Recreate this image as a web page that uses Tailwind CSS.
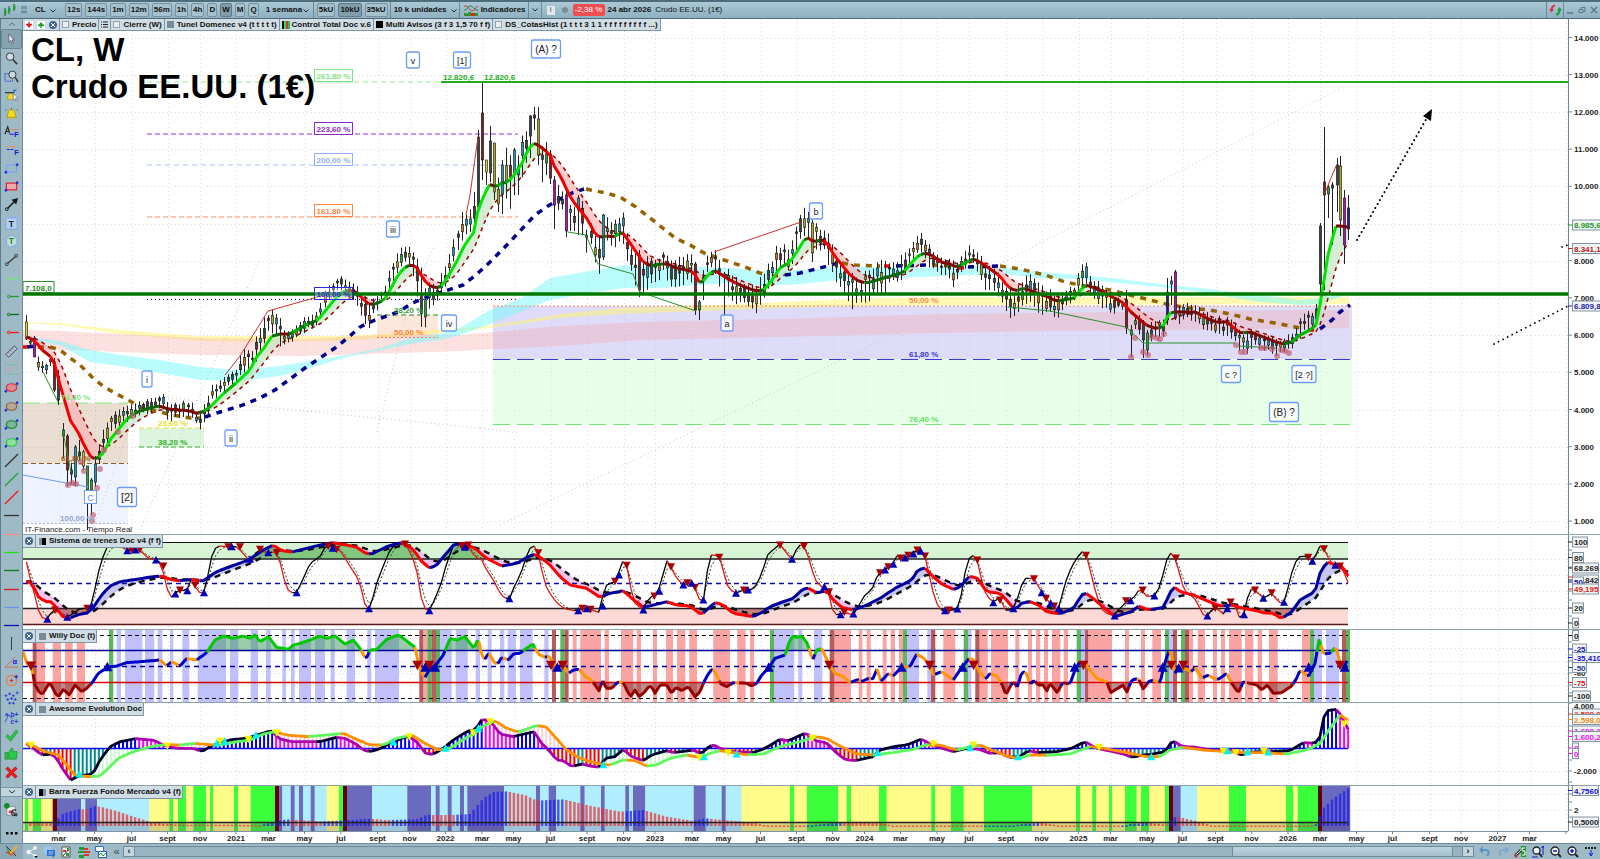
<!DOCTYPE html>
<html lang="es">
<head>
<meta charset="utf-8">
<title>CL, W - Crudo EE.UU. (1€)</title>
<script src="https://cdn.jsdelivr.net/npm/@tailwindcss/browser@4"></script>
</head>
<body class="bg-white font-['Liberation_Sans',Arial,sans-serif] text-[8px] leading-none text-[#111] overflow-hidden">
<div class="flex h-screen flex-col">

<header class="flex h-[19px] shrink-0 items-center border-t-2 border-b border-t-[#4d6c7c] border-b-[#4f6a78] bg-linear-to-b from-[#abc8d6] to-[#8fb0c0] font-bold">
  <div class="flex h-full w-[19px] items-center justify-center"><svg class="h-3 w-4" viewBox="0 0 16 12"><path d="M3 4v8M7 2v8M12 0v7" stroke="#1d5c2a"/><path d="M2 6h2.4v4H2zM6 4h2.4v4H6zM11 1.500h2.400v4H11z" fill="#1fa035"/></svg></div>
  <svg class="mr-2 ml-[2px] h-3 w-[6px]" viewBox="0 0 8 12" fill="none" stroke="#55707e"><path d="M1 1h2v3H1zM5 1h2v3H5zM1 7h2v3H1zM5 7h2v3H5z"/></svg>
  <div class="relative h-full w-[30px]"><select aria-label="Valor" class="h-full w-full appearance-none outline-none"><option>CL</option></select><svg class="pointer-events-none absolute right-[9px] top-[7px] h-1 w-1.5" viewBox="0 0 6 4"><path d="M.5.500 3 3 5.500.500" fill="none" stroke="#1c2c34"/></svg></div>
  <nav id="frames" class="flex items-center gap-[3px]" aria-label="Marco temporal"></nav>
  <div class="relative ml-[3px] h-full w-[52px] border-r border-[#6d8999]"><select aria-label="Periodo" class="h-full w-full appearance-none pl-1 outline-none"><option>1 semana</option></select><svg class="pointer-events-none absolute right-1 top-[7px] h-1 w-1.5" viewBox="0 0 6 4"><path d="M.5.500 3 3 5.500.500" fill="none" stroke="#1c2c34"/></svg></div>
  <div id="units" class="ml-[3px] flex items-center gap-[3px]"></div>
  <div class="relative ml-[2px] h-full w-[70px] border-x border-[#6d8999]"><select aria-label="Unidades" class="h-full w-full appearance-none pl-[3px] outline-none"><option>10 k unidades</option></select><svg class="pointer-events-none absolute right-[2px] top-[7px] h-1 w-1.5" viewBox="0 0 6 4"><path d="M.5.500 3 3 5.500.500" fill="none" stroke="#1c2c34"/></svg></div>
  <button class="flex h-full items-center gap-[3px] pl-1 pr-[2px]"><svg class="h-3 w-[14px]" viewBox="0 0 14 12"><path d="M0 12V9h3v3zM4 12V8h3v4zM11 12V9h3v3z" fill="#18a028"/><path d="M3 12v-2h1v2zM7 12V9h4v3z" fill="#e02020"/><path d="M0 3c3-5 5 4 8 4s3-4 6-5" fill="none" stroke="#d04040"/><path d="M0 6c3 1 4-5 7-4s4 5 7 4" fill="none" stroke="#208838"/></svg>Indicadores</button>
  <button class="flex h-full w-[14px] items-center justify-center border-x border-[#6d8999]" aria-label="Más indicadores"><svg class="h-1 w-1.5" viewBox="0 0 6 4"><path d="M.5.500 3 3 5.500.500" fill="none" stroke="#1c2c34"/></svg></button>
  <button class="ml-[5px] flex h-[9px] w-2 items-center justify-center bg-[#e4e8ea] text-[#788]" aria-label="Información">i</button>
  <svg class="ml-[7px] size-[6px]" viewBox="0 0 6 6"><circle cx="3" cy="3" r="3" fill="#7c8b92"/></svg>
  <span class="ml-[5px] flex h-3 w-8 items-center justify-center rounded-[2px] bg-[#ef4d50] font-normal text-white">-2,38 %</span>
  <span class="ml-[3px]">24 abr 2026</span>
  <span class="ml-1 font-normal">Crudo EE.UU. (1€)</span>
  <div class="ml-auto flex h-full items-center">
    <button class="flex h-full w-[18px] items-center justify-center border-x border-[#6d8999]" aria-label="Sincronizar"><svg class="h-3 w-[13px]" viewBox="0 0 13 12" fill="none" stroke-width="2"><path d="M6 1.500C3 1.500 2.500 4 2.500 7" stroke="#e03040"/><path d="m0 5 2.500 3.500L5 5z" fill="#e03040"/><path d="M7 10.500c3 0 3.500-2.500 3.500-5" stroke="#10a030"/><path d="M8 6.500 10.500 3 13 6.500z" fill="#10a030"/></svg></button>
    <button class="flex w-3 justify-center" aria-label="Minimizar"><svg class="size-2" viewBox="0 0 8 8"><path d="M1 7h6" stroke="#62798a" stroke-width="1.500"/></svg></button>
    <button class="flex w-3 justify-center" aria-label="Restaurar"><svg class="size-2" viewBox="0 0 8 8" fill="none" stroke="#62798a"><path d="M1 3.500h4v3H1zM3 3.500v-2h4v4H5"/></svg></button>
    <button class="flex w-3 justify-center" aria-label="Cerrar"><svg class="size-2" viewBox="0 0 8 8"><path d="m1 1 6 6M7 1 1 7" stroke="#62798a" stroke-width="1.500"/></svg></button>
  </div>
</header>

<div class="flex min-h-0 flex-1">
  <aside class="flex w-[23px] shrink-0 flex-col border-l border-r border-l-[#5d7b8a] border-r-[#6e8a98] bg-[#9fbac7]">
    <button class="flex h-[10px] shrink-0 items-center justify-center" aria-label="Subir"><svg class="h-1 w-2" viewBox="0 0 8 4"><path d="M1 3.500 4 1l3 2.500" fill="none" stroke="#56707e"/></svg></button>
    <div id="tools" class="flex min-h-0 flex-1 flex-col"></div>
    <button class="flex h-[10px] shrink-0 items-center justify-center border-y border-[#7b97a5] bg-[#c3d6df] mt-[6px]" aria-label="Bajar"><svg class="h-1 w-2" viewBox="0 0 8 4"><path d="M1 .5 4 3 7 .500" fill="none" stroke="#23343d"/></svg></button>
    <button class="flex h-[26px] shrink-0 items-center justify-center" aria-label="Plantillas"><svg class="size-[15px]" viewBox="0 0 16 16"><path d="M3 4h9v9H3z" fill="#f4f6f6" stroke="#889"/><circle cx="3" cy="3" r="3" fill="#128a28"/><path d="M5 8h3v3H5z" fill="#d44"/><path d="m9 9 5 5m-1-6a3 3 0 1 0 1 3" fill="none" stroke="#333" stroke-width="1.500"/></svg></button>
    <button class="flex h-[20px] shrink-0 items-center justify-center" aria-label="Más"><svg class="h-2 w-3" viewBox="0 0 12 8"><path d="M0 3h2.500v2.500H0zM4.500 3H7v2.500H4.500zM9 3h2.500v2.500H9z" fill="#111"/></svg></button>
  </aside>

  <main class="flex min-w-0 flex-1 flex-col">
    <section class="relative flex min-h-0 flex-1" aria-label="Precio">
      <svg id="price" class="h-full min-w-0 flex-1"></svg><svg id="priceAxis" class="h-full w-8 shrink-0"></svg>
      <div class="absolute left-0 top-0 flex h-[12px] items-center border-b border-r border-[#8096a2] bg-[#d0dde4] font-bold whitespace-pre">
        <div class="flex h-full w-9 items-center justify-around">
          <button aria-label="Añadir rojo"><svg class="size-2" viewBox="0 0 8 8"><path d="M0 0h8v8H0z" fill="#fff"/><path d="M4 1v5M2 3.500 4 6l2-2.500M1 3.500h6" stroke="#e02020" stroke-width="1.300" fill="none"/></svg></button>
          <button aria-label="Añadir verde"><svg class="size-2" viewBox="0 0 8 8"><path d="M0 0h8v8H0z" fill="#fff"/><path d="M4 2v5M2 4.500 4 2l2 2.500M1 4.500h6" stroke="#18a028" stroke-width="1.300" fill="none"/></svg></button>
          <button aria-label="Cerrar"><svg class="size-2" viewBox="0 0 8 8"><circle cx="4" cy="4" r="4" fill="#3f6690"/><path d="m2 2 4 4M6 2 2 6" stroke="#fff"/></svg></button>
        </div>
        <button class="flex h-full items-center gap-[3px] border-l border-[#8096a2] px-[2px]"><i class="size-[7px] border border-[#93a5ae] bg-[#e6eef2]"></i>Precio</button>
        <button class="flex h-full w-3 items-center justify-center border-l border-[#8096a2]" aria-label="Lista"><svg class="size-[7px]" viewBox="0 0 7 7"><path d="M0 1h1M2 1h5M0 3.500h1M2 3.500h5M0 6h1M2 6h5" stroke="#222"/></svg></button>
        <button class="flex h-full items-center gap-[3px] border-l border-[#8096a2] px-[2px]"><i class="size-[7px] border border-[#93a5ae] bg-[#e6eef2]"></i>Cierre (W)</button>
        <button class="flex h-full items-center gap-[3px] border-l border-[#8096a2] px-[2px]"><i class="size-[7px] bg-[#768c97]"></i>Tunel Domenec v4 (t t t t t)</button>
        <button class="flex h-full items-center gap-[2px] border-l border-[#8096a2] px-[2px]"><svg class="h-2 w-2" viewBox="0 0 8 8"><path d="M0 0h2v8H0z" fill="#111"/><path d="M2 0h2v8H2z" fill="#20e050"/><path d="M4 0h2v8H4z" fill="#e03030"/><path d="M6 0h2v8H6z" fill="#20c060"/></svg>Control Total Doc v.6</button>
        <button class="flex h-full items-center gap-[3px] border-l border-[#8096a2] px-[2px]"><i class="size-[7px] bg-black"></i>Multi Avisos (3 f 3 1,5 70 f f)</button>
        <button class="flex h-full items-center gap-[3px] border-l border-[#8096a2] px-[2px]"><i class="size-[7px] border border-[#93a5ae] bg-[#e6eef2]"></i>DS_CotasHist (1 t t t 3 1 1 f f f f f f f f f ...)</button>
      </div>
    </section>
    <section class="relative flex h-[95px] shrink-0 border-t border-[#8ca1ad]" aria-label="Sistema de trenes">
      <svg id="trenes" class="h-full min-w-0 flex-1"></svg><svg id="trenesAxis" class="h-full w-8 shrink-0"></svg>
      <div class="absolute left-0 top-0 flex h-[13px] items-center border-b border-r border-[#8096a2] bg-[#d0dde4] font-bold">
        <button class="flex h-full w-[13px] items-center justify-center border-r border-[#8096a2]" aria-label="Cerrar"><svg class="size-2" viewBox="0 0 8 8"><circle cx="4" cy="4" r="4" fill="#3f6690"/><path d="m2 2 4 4M6 2 2 6" stroke="#fff"/></svg></button>
        <svg class="mx-[3px] size-[7px]" viewBox="0 0 7 7"><path d="M0 0h3v7H0z" fill="#7c929d"/><path d="M3 0h4v7H3z"/></svg><span class="pr-px">Sistema de trenes Doc v4 (f f)</span>
      </div>
    </section>
    <section class="relative flex h-[73px] shrink-0 border-t border-[#8ca1ad]" aria-label="Willy">
      <svg id="willy" class="h-full min-w-0 flex-1"></svg><svg id="willyAxis" class="h-full w-8 shrink-0"></svg>
      <div class="absolute left-0 top-0 flex h-[13px] items-center border-b border-r border-[#8096a2] bg-[#d0dde4] font-bold">
        <button class="flex h-full w-[13px] items-center justify-center border-r border-[#8096a2]" aria-label="Cerrar"><svg class="size-2" viewBox="0 0 8 8"><circle cx="4" cy="4" r="4" fill="#3f6690"/><path d="m2 2 4 4M6 2 2 6" stroke="#fff"/></svg></button>
        <i class="mx-[3px] size-[7px] bg-[#768c97]"></i><span class="pr-px">Willy Doc (t)</span>
      </div>
    </section>
    <section class="relative flex h-[83px] shrink-0 border-t border-[#8ca1ad]" aria-label="Awesome Evolution">
      <svg id="awesome" class="h-full min-w-0 flex-1"></svg><svg id="awesomeAxis" class="h-full w-8 shrink-0"></svg>
      <div class="absolute left-0 top-0 flex h-[13px] items-center border-b border-r border-[#8096a2] bg-[#d0dde4] font-bold">
        <button class="flex h-full w-[13px] items-center justify-center border-r border-[#8096a2]" aria-label="Cerrar"><svg class="size-2" viewBox="0 0 8 8"><circle cx="4" cy="4" r="4" fill="#3f6690"/><path d="m2 2 4 4M6 2 2 6" stroke="#fff"/></svg></button>
        <i class="mx-[3px] size-[7px] bg-[#768c97]"></i><span class="pr-px">Awesome Evolution Doc</span>
      </div>
    </section>
    <section class="relative flex h-[46px] shrink-0 border-t border-[#8ca1ad]" aria-label="Barra Fuerza">
      <svg id="barra" class="h-full min-w-0 flex-1"></svg><svg id="barraAxis" class="h-full w-8 shrink-0"></svg>
      <div class="absolute left-0 top-0 flex h-[13px] items-center border-b border-r border-[#8096a2] bg-[#d0dde4] font-bold">
        <button class="flex h-full w-[13px] items-center justify-center border-r border-[#8096a2]" aria-label="Cerrar"><svg class="size-2" viewBox="0 0 8 8"><circle cx="4" cy="4" r="4" fill="#3f6690"/><path d="m2 2 4 4M6 2 2 6" stroke="#fff"/></svg></button>
        <svg class="mx-[3px] size-[7px]" viewBox="0 0 7 7"><path d="M0 0h4v7H0z"/><path d="M4 0h3v7H4z" fill="#7c929d"/></svg><span class="pr-px">Barra Fuerza Fondo Mercado v4 (f)</span>
      </div>
    </section>
    <svg id="time" class="h-3 w-full shrink-0"></svg>
  </main>
</div>

<footer class="flex h-4 shrink-0 items-center border-t border-[#6e8a98] bg-[#9fbac7]">
  <button class="flex h-full w-[23px] items-center justify-center bg-[#8ba9b8]" aria-label="Dibujar"><svg class="size-[13px]" viewBox="0 0 13 13" fill="none"><path d="m1 1 10 10" stroke="#333"/><path d="M12 1 4 10" stroke="#e9b020" stroke-width="2"/><path d="M1 8c2-3 3 2 5 2s2-3 4-2" stroke="#d33" stroke-width="1.200"/><path d="m2 3 3 6" stroke="#2a8a30"/></svg></button>
  <div class="flex w-[87px] items-center justify-around">
    <button aria-label="Compartir"><svg class="size-3" viewBox="0 0 12 12"><path d="M9 2 3 6l6 4" stroke="#f2f6f8" fill="none"/><circle cx="9" cy="2" r="1.800" fill="#fff"/><circle cx="2.500" cy="6" r="2" fill="#fff"/><circle cx="9" cy="10" r="1.800" fill="#fff"/><path d="M8 10h4l-2 2z"/></svg></button>
    <button aria-label="Chat"><svg class="size-3" viewBox="0 0 12 12"><path d="M1 1h8v6H4L2 9V7H1z" fill="#9cc4f4"/><path d="M4 4h8v6h-1v2L9 10H4z" fill="#2a6fd8"/><path d="M5.500 6h5M5.500 8h4" stroke="#cfe2fb" stroke-width=".8"/></svg></button>
    <button aria-label="Informe"><svg class="size-3" viewBox="0 0 12 12"><path d="M2 1h8v10H2z" fill="#f4f4f4" stroke="#555"/><path d="M3 4h3v2H3z" fill="#d33"/><path d="M6 7h3v3H6zM7 2h2v3H7z" fill="#2a9a3a"/><path d="m3 10 5-6" stroke="#333"/></svg></button>
    <button aria-label="Órdenes"><svg class="size-3" viewBox="0 0 12 12"><path d="M1 1h5v3H1zM0 5h6v2H0zM1 9h5v3H1z" fill="#18a030"/><path d="M6 2h4v2H6zM6 5h6v2H6zM6 8h5v2H6z" fill="#e03434"/></svg></button>
    <button aria-label="Ventanas"><svg class="size-3" viewBox="0 0 12 12"><path d="M.5.500h8v5h-8z" fill="#fff" stroke="#2a6fd8"/><path d="M3.500 5.500h8v6h-8z" fill="#fff" stroke="#2a5fb8"/><path d="m4 9 2-2 2 3 3-3" fill="none" stroke="#18a030"/></svg></button>
  </div>
  <button class="w-[13px] text-[11px] text-[#33464f]" aria-label="Contraer">«</button>
  <div class="flex h-[11px] min-w-0 flex-1 border border-[#6f8c9b]">
    <button class="flex w-[11px] items-center justify-center border-r border-[#6f8c9b] bg-[#c3d6df] text-[9px] font-bold">‹</button>
    <div class="flex min-w-0 flex-1 bg-[#98b3c1]"><div class="ml-auto mr-[9px] h-full w-1/6 border-x border-[#6f8c9b] bg-linear-to-b from-[#bdd3de] to-[#a4c0ce]"></div></div>
    <button class="flex w-[11px] items-center justify-center border-l border-[#6f8c9b] bg-[#c3d6df] text-[9px] font-bold">›</button>
  </div>
  <div class="flex w-[126px] items-center justify-around pl-[2px]">
    <button aria-label="Deshacer"><svg class="size-3" viewBox="0 0 12 12"><path d="M2 4h4c4 0 5 3 2 6" stroke="#5d93c8" stroke-width="2" fill="none"/><path d="m0 4 4-4v8z" fill="#5d93c8"/></svg></button>
    <button aria-label="Rehacer"><svg class="size-3" viewBox="0 0 12 12"><path d="M10 4H6c-4 0-5 3-2 6" stroke="#7ba8d0" stroke-width="2" fill="none"/><path d="m12 4-4-4v8z" fill="#7ba8d0"/></svg></button>
    <button aria-label="Herramientas"><svg class="size-3" viewBox="0 0 12 12"><path d="M7 0h5v11H7z" fill="#1c9a30"/><path d="M11 2H8v3h3v4H8" stroke="#fff" fill="none"/><path d="m1 10 6-6" stroke="#333" stroke-width="3"/><path d="m1 10 6-6" stroke="#eee"/><circle cx="2" cy="10" r="1.600" fill="#c33"/></svg></button>
    <button aria-label="Ajustar zoom"><svg class="size-3" viewBox="0 0 12 12"><circle cx="4.500" cy="4.500" r="3.500" fill="#eef4f8" stroke="#222" stroke-width="1.300"/><path d="m7 7 3 4" stroke="#222" stroke-width="2"/><path d="M11 0v9M9.500 2 11 0l1 2M0 11h6" stroke="#1020d0" fill="none"/></svg></button>
    <button aria-label="Alejar"><svg class="size-3" viewBox="0 0 12 12"><circle cx="5" cy="5" r="4" fill="#eef4f8" stroke="#222" stroke-width="1.300"/><path d="m8 8 3 3" stroke="#222" stroke-width="2"/><path d="M3 5h4" stroke="#1020d0" stroke-width="1.500"/></svg></button>
    <button aria-label="Acercar"><svg class="size-3" viewBox="0 0 12 12"><circle cx="5" cy="5" r="4" fill="#eef4f8" stroke="#222" stroke-width="1.300"/><path d="m8 8 3 3" stroke="#222" stroke-width="2"/><path d="M3 5h4M5 3v4" stroke="#1020d0" stroke-width="1.500"/></svg></button>
    <button aria-label="Escala"><svg class="size-3" viewBox="0 0 12 12"><path d="M0 2h12" stroke="#222" stroke-width="2" stroke-dasharray="2 1"/><path d="M6 4v6M4 7l2 3 2-3" stroke="#1020d0" fill="none"/></svg></button>
  </div>
</footer>
</div>

<script>
const $ = id => document.getElementById(id);
const F = 'font-family="Liberation Sans, Arial, sans-serif"';

/* ---------- toolbar buttons ---------- */
const btn = (t, on) => `<button class="${on ? 'h-[14px] rounded-[2px] border border-[#5f7b89] bg-[#7f9daa] px-px' : 'h-[14px] rounded-[2px] border border-[#7793a1] bg-[#a6c1ce] px-px'}">${t}</button>`;
$('frames').innerHTML = ['12s','144s','1m','12m','56m','1h','4h','D','W','M','Q'].map(t => btn(t, t === 'W')).join('');
$('units').innerHTML = ['5kU','10kU','35kU'].map(t => btn(t, t === '10kU')).join('');

/* ---------- drawing tools ---------- */
const hl = c => `<path d="M0 8h16" stroke="${c}" stroke-width="1.400"/>`;
const ray = c => `<path d="M6 8h10" stroke="${c}" stroke-width="1.400"/><circle cx="5" cy="8" r="1.400" fill="none" stroke="${c}"/>`;
const diag = c => `<path d="M1 15 15 1" stroke="${c}" stroke-width="1.400"/>`;
const plus = (x, y) => `<path d="M${x - 1.500} ${y}h3M${x} ${y - 1.500}v3" stroke="#1414d8" stroke-width="1.200"/>`;
const ell = (c, f) => `<ellipse cx="8" cy="8" rx="5.500" ry="4" fill="${f}" stroke="${c}" stroke-width="1.300"/>${plus(2, 12)}${plus(14, 4)}`;
const box = (c, f) => `<path d="M2.500 4.500h11v7h-11z" fill="${f}" stroke="${c}" stroke-width="1.300"/>${plus(2, 12)}${plus(14, 4)}`;
const glyph = (t, x, y, c, s) => `<text x="${x}" y="${y}" fill="${c}" font-size="${s}" font-weight="700" ${F}>${t}</text>`;
const tools = [
 ['Cursor','<path d="m5 2 6 6.500H8.500l1.500 4-1.500.500-1.500-4-2 2z" fill="#e3eaee" stroke="#667"/>'],
 ['Lupa','<circle cx="6.500" cy="6" r="4" fill="#cfdde5" stroke="#333"/><path d="m9.500 9 4.500 5" stroke="#333" stroke-width="1.600"/>'],
 ['Zoom de zona','<path d="M1 5h8v8H1z" fill="none" stroke="#1a3fe0" stroke-dasharray="1.500 1"/><circle cx="9" cy="6" r="3.800" fill="#cfdde5" stroke="#333"/><path d="m12 9 3 5" stroke="#333" stroke-width="1.600"/>'],
 ['Alerta en línea','<path d="M1 5h10" stroke="#111"/><path d="M3 12c2-1 0-6 4-6s2 5 4 6z" fill="#f2dc20" stroke="#a08a00" stroke-width=".6"/><path d="m9 3 5-2-3 3z" fill="#1a3fe0"/><path d="m10 6 5 5h-3l1 3-2-2-1 1z" fill="#fff" stroke="#667" stroke-width=".6"/>'],
 ['Alerta','<path d="M2.500 12c3-2 0-8 5.500-8s2.500 6 5.500 8z" fill="#f2dc20" stroke="#a08a00" stroke-width=".8"/><circle cx="8" cy="13" r="1.500" fill="#d8bb00"/><path d="M3 3 1 5M13 3l2 2M8 4V2" stroke="#665"/>'],
 ['Extensión','<path d="m1 11 3-8 2 7M2 8h3" stroke="#222" stroke-width="1.200" fill="none"/><path d="M6 6h9" stroke="#e88855"/><path d="M6 11h5" stroke="#1414d8"/>' + glyph('F', 11, 14, '#1414d8', 8)],
 ['Fibonacci','<path d="M2 5h11" stroke="#e88855"/><path d="M3 8h8" stroke="#1414d8" stroke-dasharray="3 1"/>' + glyph('F', 11, 14, '#1414d8', 8)],
 ['Rectángulo azul', box('#7aa4f0','none')], ['Rectángulo rojo', box('#e02838','#eaa')],
 ['Flecha','<circle cx="3" cy="13" r="1.500" fill="none" stroke="#111"/><path d="m4 12 8-8" stroke="#111" stroke-width="1.500"/><path d="M15 1 8 3l5 5z" fill="#111"/>'],
 ['Texto','<path d="M2 2h12v12H2z" fill="#b7cff0" stroke="#7aa4f0"/>' + glyph('T', 5, 11.500, '#111', 9)],
 ['Globo','<path d="M8 1.500a6.500 6 0 1 1-1 12l-2 2v-3a6 6 0 0 1 3-11z" fill="#c2dcd8" stroke="#7aa4f0"/>' + glyph('T', 5, 11, '#128a28', 9)],
 ['Segmento','<path d="M4 12 12 5" stroke="#333" stroke-width="1.300"/><circle cx="3" cy="13" r="1.500" fill="none" stroke="#333"/><circle cx="13" cy="4" r="1.500" fill="none" stroke="#333"/>'],
 ['Rayo 1',ray('#68f068')],['Rayo 2',ray('#20a030')],['Rayo 3',ray('#0a7018')],['Rayo 4',ray('#f01818')],
 ['Regla','<path d="m2 11 9-9 3 3-9 9z" fill="#b4c6cf" stroke="#445"/><path d="m5 9 1 1m1-3 1 1m1-3 1 1" stroke="#445"/>'],
 ['Patrón','<path d="M1 3h14M1 13h14" stroke="#5cb878" stroke-dasharray="1.500 1.500"/><path d="m1 11 4-5 3 4 3-5 4 2" stroke="#c9a0a8" fill="none"/>'],
 ['Elipse roja',ell('#e02838','#dd8a90')],['Elipse marrón',ell('#9a6430','#b3a899')],['Elipse verde',ell('#128a28','#7fb59a')],['Elipse clara',ell('#28c838','#8fe0a0')],
 ['Línea 1',diag('#333')],['Línea 2',diag('#28a038')],['Línea 3',diag('#f01818')],
 ['Horizontal 1',hl('#333')],['Horizontal 2',hl('#f09080')],['Horizontal 3',hl('#18e818')],['Horizontal 4',hl('#0a8018')],['Horizontal 5',hl('#e01828')],['Horizontal 6',hl('#6a96e8')],['Horizontal 7',hl('#1010b0')],
 ['Vertical','<path d="M8 1v14" stroke="#333"/>'],
 ['Ángulo','<path d="M1 13 12 2M1 13h14" stroke="#d86858" fill="none"/>' + glyph('α', 9, 10, '#1414d8', 8)],
 ['Ciclo','<circle cx="8" cy="8" r="5.500" fill="none" stroke="#e88040" stroke-width="1.300"/><path d="M6 8h4M8 6v4" stroke="#e02020"/><path d="M13 2v4M11 4h4" stroke="#1414d8"/>'],
 ['Ondas','<g stroke="#1c38d0" stroke-width=".9">' + [[2,5],[6,3],[10,5],[14,2],[4,9],[8,8],[12,9],[6,13],[10,13]].map(p => `<path d="M${p[0] - 1.500} ${p[1]}h3M${p[0]} ${p[1] - 1.500}v3"/>`).join('') + '</g>'],
 ['Ondas abc','<path d="m1 13 4-8 4 5" stroke="#1c38d0" fill="none" stroke-width=".8"/>' + glyph('a', 1, 6, '#1c38d0', 6) + glyph('b+', 7, 7, '#1c38d0', 7) + glyph('c+', 7, 15, '#1c38d0', 7)],
 ['Aceptar','<path d="m2 9 2-2 3 3 6-8 2 2-8 10z" fill="#2cc84c" stroke="#128a28" stroke-width=".7"/>'],
 ['Me gusta','<path d="M1 7h3v7H1zM5 7l3-5c2 0 2 2 1 4h5v2l-1 6H5z" fill="#2cc84c" stroke="#128a28" stroke-width=".7"/>'],
 ['Borrar','<path d="m2 4 2-2 4 4 4-4 2 2-4 4 4 4-2 2-4-4-4 4-2-2 4-4z" fill="#f02020" stroke="#a00000" stroke-width=".7"/>']
];
$('tools').innerHTML = tools.map(([n, s], i) => `<button aria-label="${n}" class="${i ? 'flex min-h-0 flex-1 items-center justify-center' : 'flex min-h-0 flex-1 items-center justify-center rounded-[2px] border border-[#6b8795] bg-[#86a3b1]'}"><svg class="size-[15px]" viewBox="0 0 16 16" fill="none">${s}</svg></button>`).join('');

/* ---------- helpers ---------- */
let seed = 7;
const rnd = () => (seed = (seed * 16807) % 2147483647) / 2147483647;
const parse = s => s.trim().split(/\s+/).map(p => p.split(',').map(Number));
/* Study series are stored in thirds of a pixel, in three consecutive runs. */
const OX = [20, 520, 980];
const runs = (...a) => a.flatMap((s, i) => s ? parse(s).map(([x, y]) => [OX[i] + x / 3, 530 + y / 3]) : []);
const at = (p, x, k = 1) => {
  if (x <= p[0][0]) return p[0][k];
  for (let i = 1; i < p.length; i++) if (x <= p[i][0]) { const a = p[i - 1], b = p[i]; return a[k] + (b[k] - a[k]) * (x - a[0]) / (b[0] - a[0] || 1); }
  return p[p.length - 1][k];
};
const BAR = 4.03, X0 = 26.3, N = 329;
const bars = [...Array(N)].map((_, i) => X0 + i * BAR);
const ema = (v, a) => { let e = v[0]; return v.map(y => e += (y - e) * a); };
const line = (x1, y1, x2, y2, c, w = 1, d = '') => `<path d="M${x1} ${y1}L${x2} ${y2}" stroke="${c}" stroke-width="${w}" ${d ? `stroke-dasharray="${d}"` : ''} fill="none"/>`;
const rect = (x, y, w, h, c, o = 1) => `<rect x="${x}" y="${y}" width="${w}" height="${h}" fill="${c}" fill-opacity="${o}"/>`;
const text = (x, y, t, c, extra = '') => `<text x="${x}" y="${y}" fill="${c}" font-size="8" font-weight="700" ${F} ${extra}>${t}</text>`;
const path = (p, c, w = 1, d = '') => `<path d="M${p.map(q => q[0].toFixed(1) + ' ' + q[1].toFixed(1)).join('L')}" fill="none" stroke="${c}" stroke-width="${w}" stroke-linejoin="round" ${d ? `stroke-dasharray="${d}"` : ''}/>`;
const ribbon = (a, b, c, o) => `<path d="M${a.map(q => q.join(' ')).join('L')}L${[...b].reverse().map(q => q.join(' ')).join('L')}Z" fill="${c}" fill-opacity="${o}"/>`;
function painted(p, pick, w) {
  let out = '', run = [p[0]], col = null;
  for (let i = 1; i < p.length; i++) {
    const c = pick(p[i - 1], p[i], i);
    if (col && c !== col) { out += path(run, col, w); run = [p[i - 1]]; }
    col = c; run.push(p[i]);
  }
  return out + path(run, col, w);
}
const tri = (x, y, up, c, s = 3.500) => `<path d="${up ? `M${x - s} ${y + s - .5}h${2 * s}L${x} ${y - s}z` : `M${x - s} ${y - s + .5}h${2 * s}L${x} ${y + s}z`}" fill="${c}"/>`;
const tris = (up, c, s, ...a) => runs(...a).map(p => tri(p[0], p[1], up, c, s)).join('');
const ticks = [[58.7,'mar'],[94.500,'may'],[131.500,'jul'],[167.500,'sept'],[200,'nov'],[236,'2021'],[268.500,'mar'],[304.500,'may'],[341,'jul'],[377.500,'sept'],[409.500,'nov'],[445.500,'2022'],[482,'mar'],[513.500,'may'],[550.500,'jul'],[587,'sept'],[623.500,'nov'],[655,'2023'],[692,'mar'],[723.500,'may'],[760.500,'jul'],[796.500,'sept'],[832.500,'nov'],[864.500,'2024'],[900.500,'mar'],[937,'may'],[969,'jul'],[1006,'sept'],[1041.700,'nov'],[1078.500,'2025'],[1110.500,'mar'],[1147,'may'],[1182.500,'jul'],[1215.500,'sept'],[1251.700,'nov'],[1288,'2026'],[1320,'mar'],[1356.500,'may'],[1392.500,'jul'],[1429.500,'sept'],[1461,'nov'],[1497.500,'2027'],[1529.500,'mar'],[1566,'']];
const grid = (y1, y2, ys) => ticks.map(t => line(Math.round(t[0]) + .5, y1, Math.round(t[0]) + .5, y2, '#dcdcdc', 1, '1 3')).join('') + ys.map(y => line(23, Math.round(y) + .5, 1568, Math.round(y) + .5, '#dcdcdc', 1, '1 3')).join('');
const put = (id, dx, dy, s) => $(id).innerHTML = `<g transform="translate(${-dx} ${-dy})">${s}</g>`;
const tag = (y, t, c, w) => `<path d="M1568 ${y}h5" stroke="${c}"/><rect x="1572.500" y="${y - 5}" width="${w}" height="10" fill="#f1f4f5" stroke="#8196a1"/>` + text(1574, y + 3, t, c);
const mark = (y, t) => line(1568, y, 1572, y, '#6d8796') + (t ? text(1574, y + 3, t, '#222') : '');

/* ---------- price ---------- */
{
  let s = grid(19, 534, [...Array(14)].map((_, i) => 37.500 + i * 37.200));
  const band = (d, c, o) => { const p = parse(d); return ribbon(p.map(q => [q[0], q[1]]), p.map(q => [q[0], q[2]]), c, o); };
  s += rect(23, 403, 105, 60, '#c9a98c', .38) + rect(23, 463, 105, 61, '#dfe6ff', .5) + rect(139, 428, 65, 19, '#b4e6b4', .45) + rect(377, 315, 61, 22, '#fbc9ae', .45);
  s += rect(493, 306, 859, 53, '#bdb9f2', .5) + rect(493, 359, 859, 65, '#cffdcf', .5);
  s += band('22,322,323 60,323,325 120,330,334 200,336,341 260,336,342 340,336,341 400,333,337 440,329,333 480,327,329 520,321,324 560,314,318 620,308,314 700,306,311 780,302,308 850,299,306 940,297,305 1349,297,304', '#fff36a', .5);
  s += band('22,330,348 60,331,350 120,334,352 200,338,355 300,339,356 400,334,353 460,335,351 560,326,346 640,322,340 780,319,337 940,314,333 1050,313,331 1200,311,330 1349,310,328', '#f9a3a3', .32);
  s += band('36,338,341 60,341,345 90,350,362 120,355,366 160,360,373 200,367,380 240,370,381 280,366,376 303,362,370 347,355,357 377,349,351 410,338,344 440,334,340 460,328,335 490,310,324 520,299,312 550,278,300 590,271,293 625,265,288 660,268,288 700,267,285 730,268,283 760,271,286 800,270,284 840,267,280 880,267,278 920,268,277 970,265,275 1010,268,275 1040,272,278 1080,275,279 1120,279,283 1160,284,287 1200,288,292 1260,295,302 1300,300,305 1320,298,304 1349,293,294', '#76f8fb', .5);
  s += line(23, 403, 128, 403, '#7fe67f', 1, '17 7') + line(23, 463.500, 128, 463.500, '#8a5a20', 1, '5 3') + line(23, 523.500, 128, 523.500, '#a8b8e8', 1, '2 2');
  s += line(139, 428, 204, 428, '#e8e040', 1, '5 3') + line(139, 447, 204, 447, '#30b030', 1, '5 3') + line(377, 315, 438, 315, '#209020', 1, '5 3') + line(377, 337.500, 438, 337.500, '#ff8040', 1, '2 2');
  s += line(493, 306, 1352, 306, '#ff8a50', 1, '2 2') + line(493, 359.500, 1352, 359.500, '#3a3ad8', 1, '17 7') + line(493, 424.500, 1352, 424.500, '#74e874', 1, '17 7');
  s += line(147, 82, 441, 82, '#8df08d', 1, '5 4') + line(147, 134, 518, 134, '#9a30d8', 1, '5 3') + line(147, 165, 518, 165, '#a8c4fa', 1, '5 4') + line(147, 217, 518, 217, '#ff8a50', 1, '5 3') + line(147, 299.500, 518, 299.500, '#2020d0', 1, '1 3');
  for (const q of [[94,526,140,400],[140,530,187,423],[187,423,260,260],[377,432,410,300],[410,300,435,245],[160,397,480,428],[480,428,518,433],[500,525,940,312],[940,295,1345,86]]) s += line(...q, '#c4c4c4', 1, '1 3');
  s += line(441, 82, 1568, 82, '#22ac22', 2);

  const ma = parse('22,336 30,338 36,342 42,350 50,356 54,362 60,385 66,405 70,420 78,432 84,445 90,456 94,459 98,458 104,452 110,440 118,430 126,420 132,415 140,411 150,408 160,406 168,409 180,410 190,411 198,414 206,410 212,405 224,393 236,383 250,370 256,358 264,348 272,336 280,334 290,334 300,328 310,323 318,320 326,310 334,300 342,292 350,290 356,292 362,298 368,304 376,304 384,300 390,290 398,275 404,268 410,265 416,266 424,280 430,286 436,288 442,286 450,273 458,259 464,246 474,232 478,210 484,195 490,184 496,187 502,183 508,182 514,175 522,163 528,150 533,143 538,145 545,150 550,155 555,168 560,175 566,188 572,200 580,210 588,220 594,232 600,238 606,236 614,237 622,232 628,240 636,252 644,263 652,266 660,264 668,264 676,268 686,270 694,272 698,282 702,283 708,275 714,270 722,275 730,280 740,285 750,289 757,291 764,290 772,280 780,268 790,262 798,250 804,240 808,238 814,242 820,240 826,241 834,255 842,265 850,275 858,281 866,283 874,281 884,278 894,275 904,272 912,262 918,256 924,253 932,255 940,262 950,264 956,267 962,265 968,261 974,259 980,262 990,269 1000,276 1008,287 1016,291 1024,288 1034,292 1046,296 1056,301 1064,300 1074,298 1080,290 1086,285 1092,287 1100,290 1112,297 1122,302 1130,311 1138,318 1146,325 1154,328 1162,328 1168,315 1172,312 1184,312 1196,312 1206,318 1216,322 1228,322 1234,328 1240,333 1250,332 1258,335 1266,338 1276,342 1284,344 1292,342 1300,335 1310,330 1316,325 1320,305 1324,280 1328,255 1332,240 1336,226 1340,226 1348,227');
  const mp = bars.map(x => [x, at(ma, x)]);
  const sg = ema(mp.map(p => p[1]), .26).map((y, i) => [bars[i], y]);
  for (let i = 1; i < N; i++) s += `<path d="M${mp[i - 1].map(v => v.toFixed(1))}L${mp[i].map(v => v.toFixed(1))}L${sg[i].map(v => v.toFixed(1))}L${sg[i - 1].map(v => v.toFixed(1))}z" fill="${mp[i][1] < sg[i][1] ? '#c3e6c3' : '#f8b4b4'}" fill-opacity=".7"/>`;
  s += path(sg, '#9c0000', 1.500, '4 4');

  const long = [['#f00','22,347 27,347'],['#00008c','27,347 34,346'],['#946200','38,347 50,347 60,350 70,358 80,365 92,377 104,387 115,393 128,400 140,407 150,410 160,412 172,415 190,418 200,418'],['#00008c','205,417 220,412 240,406 260,398 275,390 290,379 305,368 320,358 335,348 350,336 360,327 375,320 390,315 400,311 412,303 430,296 445,291 463,285 477,274 490,262 504,248 520,231 535,215 548,206 560,199 572,193 584,189'],['#946200','586,189 606,193 620,197 636,207 650,218 665,230 675,238 690,245 704,253 724,260 745,267 765,275'],['#f00','772,276 783,275'],['#00008c','785,275 800,273 820,268 838,263'],['#946200','842,263 855,265 880,266'],['#f00','884,266 892,266'],['#00008c','896,266 928,265'],['#946200','932,265 952,266'],['#f00','958,268 966,268'],['#00008c','968,267 998,266'],['#946200','1000,266 1020,269 1045,275 1065,282 1085,286 1110,290 1130,295 1150,300 1170,305 1190,308 1210,310 1230,314 1250,319 1275,323 1300,328'],['#f00','1308,330 1318,330'],['#00008c','1320,329 1332,320 1340,312 1350,305']];
  for (const [c, d] of long) s += path(parse(d), c, 3.500, '6 6');

  const big = parse('26,315,340,322,339,3 34,336,357,338,357,6 54,358,392,362,390,4 58,370,405,376,400,0 62.7,423,458,430,436,5 67,434,486,436,470,4 70.5,463,484,470,474,0 74.5,445,486,447,477,1 78.7,440,460,452,456,0 82.6,450,470,452,466,3 87,466,530,466,490,5 91,478,515,480,490,5 94.5,456,487,464,482,1 478,130,210,137,207,0 482,83,180,113,160,4 486,160,185,160,172,3 490,126,182,141,173,0 494,143,200,143,192,2 502,160,214,165,194,1 514,148,195,150,175,1 530,115,158,116,136,0 534,107,130,115,118,4 538,107,165,119,155,2 550,150,184,154,178,4 554,176,229,180,205,6 566,187,237,195,231,6 578,195,235,198,210,1 603,214,260,215,257,1 639,250,297,255,290,4 695,262,315,264,310,4 699,300,320,302,310,5 724,272,322,274,277,0 812,220,262,223,253,2 1126,290,334,300,328,4 1131,325,357,330,335,5 1143,320,358,322,340,0 1147,330,355,333,350,5 1167,278,325,292,320,7 1171,276,305,281,284,1 1175,270,320,272,318,6 1319.5,223,300,226,284,0 1324,127,290,182,195,4 1328,185,218,187,194,5 1332,182,245,185,188,0 1336.5,158,212,165,185,0 1340,156,236,166,220,2 1344,190,264,198,245,6 1348,195,240,208,229,7');
  const env = parse('28,336,343 38,356,370 46,364,376 50,355,366 98,446,468 103,430,450 108,422,442 112,412,430 120,410,425 132,404,420 142,402,414 150,398,412 158,395,407 164,396,410 168,402,420 180,402,418 190,402,416 197,412,428 201,412,432 206,398,418 212,385,400 220,380,393 228,374,386 238,370,382 240,352,378 252,353,366 257,335,362 266,316,336 270,310,326 276,314,340 284,328,346 292,330,342 300,320,334 310,315,328 318,310,325 322,296,312 330,284,298 340,275,288 348,280,300 356,284,302 362,296,320 367,303,330 374,298,312 384,286,302 392,266,288 398,250,270 404,243,262 410,250,266 416,256,285 420,270,318 425,285,326 432,287,304 438,284,302 446,262,288 454,240,262 462,214,240 470,210,232 474,190,225 498,180,213 506,150,200 510,160,205 518,150,197 524,134,162 542,142,180 546,142,172 558,182,210 562,190,210 570,207,235 582,197,235 586,230,258 590,222,242 595,235,270 599,240,276 607,213,240 613,222,250 620,214,236 624,214,245 628,240,268 635,252,285 643,268,298 648,256,285 656,258,286 664,250,270 672,260,290 680,258,288 690,256,280 703,268,302 708,254,266 714,248,272 720,264,285 730,272,302 742,282,305 757,286,310 765,270,296 772,262,282 776,246,268 784,246,262 790,250,272 794,235,255 800,214,240 808,208,236 818,228,250 823,225,246 830,240,270 838,258,286 846,272,295 852,276,310 862,278,300 872,264,298 884,258,294 892,265,280 902,255,278 910,245,260 918,235,255 922,235,250 928,244,264 938,255,275 948,258,278 954,264,288 962,254,272 970,245,260 977,250,268 985,266,287 996,272,290 1006,285,314 1014,290,320 1026,272,300 1036,285,310 1048,290,313 1058,296,316 1066,290,305 1074,288,302 1080,268,288 1085,262,283 1092,280,300 1102,286,306 1112,298,317 1120,298,306 1136,316,334 1152,320,340 1162,320,336 1180,305,322 1190,302,318 1200,308,326 1210,315,331 1222,318,333 1232,320,338 1238,330,348 1245,332,354 1256,332,346 1266,334,350 1275,340,356 1284,338,352 1292,332,348 1300,320,338 1304,311,332 1312,310,330 1316,304,325');
  const cols = ['#39463f','#2595b3','#a8a628','#d8d030','#7c1f26','#35a040','#b010b0','#1c1c8c'];
  const mix = [0,0,0,1,1,2,4,5,8,0];
  const candle = (x, h, l, a, b, c) => { x = Math.round(x) + .5; return line(x, h.toFixed(1), x, l.toFixed(1), '#222') + `<rect x="${x - 1.200}" y="${a.toFixed(1)}" width="2.400" height="${Math.max(1.500, b - a).toFixed(1)}" fill="${c}" stroke="#1a1a1a" stroke-width=".6"/>`; };
  for (const x of bars) {
    if (big.some(b => Math.abs(b[0] - x) < 2.100)) continue;
    const h0 = at(env, x, 1), l0 = at(env, x, 2), r = l0 - h0;
    const h = h0 + (rnd() - .5) * r * .3, l = l0 - (rnd() - .5) * r * .3;
    const a = h + (l - h) * (.15 + rnd() * .35), b = a + (l - a) * (.08 + rnd() * .6);
    s += candle(x, h, l, a, b, cols[mix[Math.floor(rnd() * 10)]] || '#c07a24');
  }
  for (const b of big) s += candle(b[0], b[1], b[2], b[3], b[4], cols[b[5]]);

  const shade = (a, b) => { const m = (a[1] - b[1]) / BAR; return m > .9 ? '#00e400' : m > .5 ? '#00b400' : m > .02 ? '#0a6a0a' : m > -.5 ? '#7a0808' : m > -.9 ? '#b80000' : '#f00000'; };
  s += painted(mp, shade, 3);

  for (const d of ['225,375 240,356 268,311 335,292','466,215 470,195 478,137','714,252 801,222','1324,195 1336,166']) s += path(parse(d), '#c83030', 1);
  for (const d of ['43,372 58,402','63,432 71,472','568,232 586,235 598,264 633,274 640,292 696,311','1008,307 1050,311 1126,327 1143,343 1235,343','1238,346 1276,348']) s += path(parse(d), '#28902c', 1);
  s += line(23, 475, 88, 487, '#6f9af0');
  s += parse('68,485 72,483 76,484 84,471 81,462 100,469 97,488 93,515 92,521 104,450 118,432 133,416 1131,357 1135,338 1143,352 1148,355 1152,337 1157,338 1160,339 1164,334 1236,345 1241,352 1245,352 1261,348 1265,348 1272,349 1277,356 1281,350 1285,351 1289,353').map(p => `<circle cx="${p[0]}" cy="${p[1]}" r="3" fill="#c05868" fill-opacity=".65"/>`).join('');
  s += line(23, 294, 1568, 294, '#007800', 3.500);

  s += `<rect x="23" y="281.500" width="31" height="11" fill="#fff" stroke="#2c8a2c"/>` + text(25, 290.500, '7.108,0', '#2c8a2c');
  for (const [y, t, c] of [[69.5,'261,80 %','#7fe67f'],[122.500,'223,60 %','#8a28c8'],[153.500,'200,00 %','#8fb0f4'],[204.500,'161,80 %','#ff8040'],[287.500,'100,00 %','#2a2ad8']])
    s += `<rect x="314.500" y="${y}" width="38" height="12" fill="#fff" fill-opacity="${y > 280 ? .3 : 1}" stroke="${c}"/>` + text(316.500, y + 9, t, c);
  for (const [x, y, t, c] of [[61,400,'76,40 %','#7fe67f'],[61,460.500,'61,80 %','#9a5a18'],[60,521,'100,00 %','#8fa5d8'],[158,425.500,'23,60 %','#e6e020'],[158,444.500,'38,20 %','#30b030'],[394,312.500,'38,20 %','#3c9a3c'],[394,335,'50,00 %','#ff8040'],[909,303,'50,00 %','#ff8a50'],[909,357,'61,80 %','#3a3ad8'],[909,422,'76,40 %','#60e060'],[443,79.500,'12.820,6','#22ac22'],[484,79.500,'12.820,6','#22ac22']]) s += text(x, y, t, c);
  for (const [x, y, w, h, t, z] of [[413,60,13,16,'v',9],[462,60,17,16,'[1]',9],[546,49,29,18,'(A) ?',10],[393,229,13,16,'iii',9],[449,323,15,16,'iv',9],[147,379,10,16,'i',9],[231,438,12,16,'ii',9],[127,497,19,19,'[2]',11],[816,211,13,16,'b',9],[727,323,12,16,'a',9],[1231,374,19,17,'c ?',9],[1304,374,24,17,'[2 ?]',9],[1284,412,29,19,'(B) ?',10]])
    s += `<rect x="${x - w / 2}" y="${y - h / 2}" width="${w}" height="${h}" rx="2" fill="#fbfdff" fill-opacity=".85" stroke="#6c9cf4" stroke-width="1.300"/><text x="${x}" y="${y + 3.500}" font-size="${z}" text-anchor="middle" fill="#222" ${F}>${t}</text>`;
  s += `<rect x="84.500" y="490.500" width="12" height="13" fill="#fff" stroke="#6c9cf4"/><text x="90.500" y="500.500" font-size="9" text-anchor="middle" fill="#5a8af0" ${F}>C</text>`;
  s += `<path d="M1357 240 1428 116" stroke="#000" stroke-width="2" stroke-linecap="round" stroke-dasharray=".1 4.500"/><path d="m1432 109-1 12-8-5z"/><path d="M1494 344 1568 306M1562 247l6-2" stroke="#000" stroke-width="1.700" stroke-linecap="round" stroke-dasharray=".1 5"/>`;
  s += `<g font-weight="700" font-size="33" ${F}><text x="31" y="61">CL, W</text><text x="31" y="98">Crudo EE.UU. (1€)</text></g><text x="25" y="532" font-size="8" fill="#222" ${F}>IT-Finance.com - Tiempo Real</text>`;
  put('price', 23, 19, s);

  let a = line(1568.500, 19, 1568.500, 534, '#6d8796');
  for (let i = 14; i > 0; i--) if (i !== 9) a += mark(37.500 + (14 - i) * 37.200, i + '.000');
  a += tag(225, '8.985,6', '#1c9a1c', 34) + tag(248.500, '8.341,1', '#c02020', 34) + tag(306, '6.809,8', '#2020b0', 34);
  put('priceAxis', 1568, 19, a);
}

/* ---------- sistema de trenes ---------- */
{
  const fast = runs('10,60 20,100 32,150 45,200 55,240 70,268 82,268 95,245 105,240 115,245 140,262 160,250 180,235 200,235 215,225 222,190 232,140 245,90 262,50 280,42 300,48 320,60 350,58 370,70 385,85 410,90 425,105 435,150 445,190 455,202 465,190 480,180 500,182 515,145 530,180 540,188 552,188 565,130 575,80 585,55 600,48 630,50 650,50 665,65 690,95 705,70 720,60 745,70 760,65 770,70 785,110 795,160 808,188 830,188 850,145 870,100 900,80 920,42 940,55 955,55 970,75 990,110 1005,130 1020,160 1032,215 1042,242 1050,235 1070,160 1085,120 1105,70 1125,42 1155,42 1175,75 1190,120 1205,210 1218,242 1230,240 1245,205 1262,165 1280,100 1300,45 1320,42 1345,50 1365,80 1385,90 1400,120 1420,150 1440,190 1455,205 1468,207 1485,165 1498,140',
   '0,140 15,90 30,55 42,48 55,70 65,120 80,175 100,205 120,228 140,238 165,242 185,235 215,240 238,248 250,190 260,165 285,155 295,130 310,90 320,105 330,165 345,220 370,240 385,205 405,195 420,170 440,90 455,115 470,145 490,165 510,158 525,175 535,205 550,215 560,130 575,72 598,80 612,130 625,175 648,190 670,180 690,182 710,165 725,130 745,70 765,55 780,42 800,70 816,88 835,45 850,45 865,80 885,150 910,175 925,185 935,235 950,255 975,248 1000,255 1020,220 1035,195 1055,180 1075,130 1100,115 1120,100 1130,78 1160,85 1180,65 1205,62 1215,80 1230,145 1245,210 1262,240 1285,240 1310,240 1325,190 1340,100 1355,72 1370,85 1385,150 1400,200 1420,215 1438,205',
   '60,205 75,240 95,240 110,215 120,175 135,145 160,145 170,160 185,185 205,215 235,240 250,180 262,140 275,110 290,85 306,65 320,75 335,140 350,200 370,245 400,258 415,240 440,215 460,205 480,175 500,198 520,200 535,180 550,130 560,90 573,68 590,95 605,160 620,190 640,200 655,225 670,255 680,260 695,240 710,230 728,255 740,235 752,215 768,230 780,268 795,250 800,210 815,175 825,180 850,205 875,190 895,215 910,222 925,170 940,110 955,80 985,78 998,95 1010,70 1020,48 1035,60 1050,95 1065,105 1085,110 1104,158');
  const slow = runs('10,150 35,160 55,200 75,215 95,215 110,235 130,262 150,265 170,255 205,248 225,225 245,195 270,168 300,155 350,148 400,140 425,138 450,148 475,152 500,150 520,148 545,155 565,142 590,125 630,110 680,92 700,80 730,60 760,45 785,62 815,66 860,55 900,45 940,38 980,45 1010,52 1040,72 1060,70 1100,50 1140,38 1160,42 1185,65 1205,95 1230,115 1250,105 1275,75 1300,45 1330,40 1365,55 1400,85 1445,108 1480,102 1498,97',
   '0,95 20,82 45,72 65,85 90,105 120,140 150,165 200,175 240,202 270,190 310,182 335,205 370,232 400,225 440,215 470,225 510,228 545,255 565,235 585,218 605,222 640,250 700,260 730,245 750,230 790,215 820,205 840,185 860,172 890,188 920,182 940,210 965,232 1000,240 1040,225 1080,205 1130,172 1175,150 1195,118 1215,115 1240,140 1265,162 1300,178 1320,172 1345,140 1370,142 1400,185 1438,190',
   '60,190 75,205 105,240 125,220 150,215 175,225 200,245 240,252 280,235 305,195 320,190 345,210 380,240 405,260 430,252 455,245 475,228 505,240 550,232 565,200 580,168 600,185 640,195 680,212 720,228 755,225 790,235 820,240 850,248 880,250 905,266 935,245 960,210 1005,185 1020,130 1040,95 1065,105 1085,105 1104,138');
  let s = grid(534, 629, [559, 575, 591, 608]);
  s += rect(23, 542, 1325, 17, '#d7f4d5') + rect(23, 609, 1325, 15, '#fdd9d6');
  const sp = bars.map(x => [x, at(slow, x)]), fp = bars.map(x => [x, at(fast, x)]);
  const es = ema(sp.map(p => p[1]), .26).map((y, i) => [bars[i], y]);
  const ef = ema(fp.map(p => p[1]), .6).map((y, i) => [bars[i], y]);
  for (let i = 1; i < N; i++) s += `<path d="M${sp[i - 1]}L${sp[i]}L${es[i]}L${es[i - 1]}z" fill="${sp[i][1] < es[i][1] ? '#b4b4ea' : '#f0b0e8'}" fill-opacity=".75"/>`;
  s += `<defs><clipPath id="cTop"><path d="M23 534H1348V559H23z"/></clipPath><clipPath id="cLow"><path d="M23 608.500H1348V625H23z"/></clipPath></defs>`;
  const area = y => 'M' + [[X0, y], ...sp, [1348, y]].map(q => q.join(' ')).join('L') + 'z';
  s += `<path d="${area(559)}" fill="#2c9a2c" fill-opacity=".5" clip-path="url(#cTop)"/><path d="${area(608.500)}" fill="#8c1810" fill-opacity=".45" clip-path="url(#cLow)"/>`;
  s += line(23, 542.500, 1348, 542.500, '#111') + line(23, 559, 1348, 559, '#222', 1.500) + line(23, 583.500, 1348, 583.500, '#0a0ab4', 1.500, '5 4') + line(23, 608.500, 1348, 608.500, '#222', 1.500) + line(23, 624.500, 1348, 624.500, '#5a1a1a', 1.500);
  s += path(ef, '#2a4a2a', 1, '2 2') + painted(fp, (a, b) => b[1] <= a[1] ? '#000' : '#e01818', 1.300);
  s += path(es, '#111', 2.500, '6 5') + painted(sp, (a, b) => b[1] < a[1] - .1 ? '#00009c' : '#fb0000', 3);
  s += tris(false, '#a80000', 4, '105,240 202,235 335,60 360,58 430,108 480,180 525,165 625,50 660,50 720,58 770,68 925,48 950,58 1155,42 1325,48 1345,45','55,68 187,235 212,238 285,154 320,106 403,198 453,110 502,158 525,172 598,82 672,180 780,45 852,48 927,185 973,246 1080,128 1105,110 1142,84 1165,76 1192,60 1215,78 1287,240 1372,90','60,210 162,146 198,205 222,228 318,76 438,212 488,180 588,84 706,234 752,216 825,180 875,188 985,82 1032,56 1080,108');
  s += tris(true, '#0000b4', 4, '82,268 142,262 215,228 322,62 347,60 408,90 466,192 502,182 552,188 635,50 690,88 745,68 830,188 938,55 1047,236 1228,242 1335,52 1468,206','175,242 200,236 248,228 297,135 370,240 418,184 490,165 515,160 550,210 648,190 684,180 816,88 913,170 962,254 1000,252 1095,120 1120,103 1155,84 1180,72 1202,64 1275,242 1312,237','40,218 100,236 185,188 212,220 236,236 404,258 452,212 523,198 682,258 742,236 792,254 850,205 912,217 997,94 1066,106');
  put('trenes', 23, 535, s);
  put('trenesAxis', 1568, 535, line(1568.500, 534, 1568.500, 629, '#6d8796') + [550,567,591,600,616].map(y => mark(y)).join('') + tag(542, '100', '#222', 15) + tag(557.500, '80', '#222', 11) + tag(568, '68.269', '#222', 26) + tag(580, '62,842', '#222', 26) + line(1568, 577, 1572, 577, '#e02020') + tag(582, '50', '#1414b0', 11) + tag(589, '49,195', '#e02020', 26) + tag(608, '20', '#222', 11) + tag(623, '0', '#222', 6));
}

/* ---------- willy ---------- */
{
  const w = runs('10,365 20,400 35,410 45,465 60,490 70,490 85,462 92,462 105,488 115,500 130,478 148,495 165,465 185,485 200,475 215,460 235,430 262,412 290,408 320,398 360,395 400,392 420,390 440,408 455,395 480,408 500,385 530,390 560,368 585,330 610,318 640,325 670,318 690,325 705,315 720,335 745,320 770,352 790,355 805,358 820,345 840,340 870,330 900,318 920,325 945,318 975,342 1000,330 1020,355 1038,388 1050,360 1070,358 1100,328 1135,315 1150,325 1185,352 1195,400 1205,430 1215,442 1230,415 1245,408 1270,375 1290,325 1310,330 1335,320 1362,355 1375,325 1385,375 1395,388 1405,368 1425,400 1435,400 1445,382 1465,390 1480,372 1498,370',
   '0,370 15,358 38,342 55,372 75,382 85,378 95,390 110,412 128,405 145,430 160,420 178,418 195,440 215,450 237,482 248,450 258,475 275,475 295,455 310,458 325,490 333,498 345,480 358,500 375,485 385,470 395,470 405,490 420,465 440,465 455,490 468,472 485,482 505,470 525,500 540,485 550,460 560,440 577,415 590,435 600,460 620,470 640,458 680,460 695,468 710,460 725,435 745,415 765,385 795,375 810,330 820,318 830,322 845,318 862,340 878,390 890,360 905,355 928,405 945,430 970,440 990,458 1015,448 1025,455 1045,445 1058,448 1072,415 1082,455 1105,430 1120,438 1145,410 1170,410 1190,372 1212,385 1230,405 1240,435 1265,425 1300,450 1325,412 1348,385 1362,390 1378,425 1397,448',
   '30,430 50,438 65,460 78,495 90,470 100,455 112,472 125,428 138,425 150,465 162,450 175,465 190,465 200,485 210,460 232,488 248,458 270,462 285,420 300,395 315,400 330,420 350,445 380,455 392,488 430,465 440,488 455,450 475,445 490,478 505,455 520,450 540,460 550,415 565,365 575,370 585,430 600,410 635,425 645,412 665,445 685,435 700,445 715,448 740,430 755,460 775,488 790,455 830,465 845,480 862,465 880,490 905,488 935,468 950,445 960,420 985,440 1005,400 1018,325 1030,372 1050,370 1068,350 1080,400 1092,415 1104,385');
  const cells = {
   '#fba4a4': ['50,75 98,123 135,158 170,195 1210,1222','158,170 181,243 254,267 303,340 350,363 399,411 438,459 471,496 508,531 580,630 652,677 690,702 943,993 1016,1027 1040,1052 1088,1100 1112,1125 1137,1149 1270,1306 1379,1403','33,84 106,118 144,156 168,181 192,204 216,241 251,264 325,396 435,447 483,495 517,543 627,639 653,675 699,711 723,735 747,785 795,820 833,846 867,893 966,990'],
   '#c0c0fb': ['290,303 315,367 375,403 413,427 450,460 487,508 533,618 630,655 692,714 738,752 787,798 813,824 837,873 885,915 932,944 980,1005 1042,1054 1065,1137 1260,1295 1307,1343 1367,1380 1403,1415 1440,1453 1463,1488 1500,1538','73,86 762,823 835,847 882,907 1161,1197 1222,1233 1344,1354','303,315 567,579 1002,1026 1038,1077'],
   '#b85c5c': ['38,50 1198,1210 1234,1248','96,108 133,146 929,943 1233,1246 1366,1379','315,325 579,591 615,627 1086,1098'],
   '#5cb85c': ['267,280 1222,1234 1248,1260','121,133 750,762 1149,1161 1331,1344','290,303 555,567 603,615 990,1002 1098,1110']
  };
  let s = grid(630, 702, [648, 661, 673, 685]);
  for (const c in cells) cells[c].forEach((d, i) => parse(d).forEach(([a, b]) => s += rect((OX[i] + a / 3).toFixed(1), 630, ((b - a) / 3).toFixed(1), 72, c)));
  const wp = []; for (let x = 23; x <= 1348; x += 2) wp.push([x, at(w, x)]);
  const area = y => 'M' + [[23, y], ...wp, [1348, y]].map(q => q.join(' ')).join('L') + 'z';
  s += `<defs><clipPath id="wTop"><path d="M23 630H1348V650.500H23z"/></clipPath><clipPath id="wLow"><path d="M23 682.500H1348V702H23z"/></clipPath></defs><path d="${area(650.500)}" fill="#3c9a5c" fill-opacity=".5" clip-path="url(#wTop)"/><path d="${area(682.500)}" fill="#7a2020" fill-opacity=".5" clip-path="url(#wLow)"/>`;
  s += line(23, 635.500, 1348, 635.500, '#111', 1, '4 3') + line(23, 698.500, 1348, 698.500, '#111', 1, '4 3') + line(23, 650.500, 1348, 650.500, '#00009c', 1.500) + line(23, 666.500, 1348, 666.500, '#00009c', 1.500, '5 4') + line(23, 682.500, 1348, 682.500, '#d80000', 1.500);
  s += painted(wp, (a, b) => b[1] < 650.500 ? '#00c800' : b[1] > 683 ? '#960000' : b[1] < a[1] ? '#0000c8' : '#ff9600', 3);
  s += tris(false, '#a80000', 5, '33,408 1192,406 1228,406','93,406 128,406 928,406 1229,406 1361,406','310,406 574,406 610,406 1080,406');
  s += tris(true, '#0000b4', 5, '262,410 1216,412 1245,412','112,412 746,412 1145,412 1328,412','284,412 548,412 596,414 986,412 1094,412');
  put('willy', 23, 630, s);
  put('willyAxis', 1568, 630, line(1568.500, 629, 1568.500, 702, '#6d8796') + [642,655,661,673,685,693].map(y => mark(y)).join('') + tag(635.500, '0', '#222', 6) + tag(649, '-25', '#1414c0', 14) + text(1574, 676, '-60', '#222') + tag(667.500, '-50', '#1c3c9c', 14) + tag(657.500, '-35,410', '#1414d0', 34) + tag(682.500, '-75', '#e02020', 14) + tag(696, '-100', '#222', 18));
}

/* ---------- awesome evolution ---------- */
{
  const A = runs('10,635 40,655 65,675 95,672 110,685 130,720 152,750 175,738 200,735 220,730 240,690 270,650 300,635 345,626 400,630 430,645 470,655 520,655 545,665 570,650 600,638 640,628 680,625 710,615 755,602 775,625 815,635 900,635 950,622 975,625 1005,640 1030,660 1050,665 1075,658 1120,635 1165,618 1190,635 1218,672 1240,672 1270,655 1300,630 1345,602 1365,600 1388,565 1415,578 1440,612 1480,620 1498,615',
   '0,615 42,605 65,640 90,665 110,690 130,692 155,710 185,702 210,708 238,712 255,685 285,680 310,658 335,680 370,692 395,675 440,662 460,668 520,660 545,672 560,655 580,643 600,655 640,665 700,668 735,655 780,628 805,632 858,608 885,632 920,638 945,665 975,688 1005,692 1060,680 1080,660 1120,650 1160,645 1205,627 1235,645 1300,665 1340,655 1378,658',
   '30,670 60,668 85,682 120,680 145,662 170,668 230,665 275,655 315,635 350,655 400,665 430,672 455,682 490,675 520,672 555,665 575,635 590,635 600,648 650,652 700,662 760,662 780,675 830,665 880,665 930,662 970,638 1005,640 1020,620 1035,545 1050,540 1072,538 1085,560 1104,598');
  const B = runs('10,640 35,645 75,665 115,675 140,705 165,735 205,740 240,738 265,715 295,685 340,665 400,648 440,643 480,645 520,640 580,645 600,645 650,635 690,630 730,612 765,605 800,615 860,620 920,615 970,610 1010,628 1050,645 1090,645 1130,625 1175,615 1215,640 1255,660 1290,655 1330,628 1365,610 1390,588 1425,572 1455,592 1490,605',
   '0,605 50,586 80,592 100,615 140,660 180,685 230,700 270,705 310,690 345,692 380,708 410,705 450,685 500,675 540,683 570,670 600,662 625,665 680,675 730,672 780,650 850,632 885,620 920,625 960,648 1010,672 1060,675 1120,668 1180,658 1215,645 1260,645 1310,660 1350,650 1378,645',
   '0,645 40,662 80,678 115,685 150,675 200,676 270,672 330,650 370,655 440,668 500,680 540,680 570,660 610,652 670,660 740,665 790,668 850,668 920,672 980,660 1020,640 1050,595 1080,555 1104,570');
  const Z = 748.500, ap = bars.map(x => [x, at(A, x)]), bp = bars.map(x => [x, at(B, x)]);
  let s = grid(703, 785, [726, 771]);
  for (let i = 1; i < N; i++) {
    const x = bars[i], a = ap[i][1], b = bp[i][1], up = a <= ap[i - 1][1] - .05;
    s += line(x, a, x, b, b > a ? '#c4f8c4' : '#fcc8c8', 1.500) + line(x, Z, x, a, a < Z ? (up ? '#0000f8' : '#fa00fa') : (up ? '#008c8c' : '#fa0000'), 2);
  }
  s += line(23, Z, 1348, Z, '#0a0af0', 1.500);
  s += painted(ap, (a, b) => b[1] < a[1] - .05 ? '#00002c' : '#ac00ac', 2.800) + painted(bp, (a, b) => b[1] < a[1] ? '#5cf85c' : '#ff9000', 2.800);
  s += tris(false, '#f4f400', 4, '33,646 442,648 600,634 685,628 770,608 1168,620 1360,608 1410,575','538,683 625,668 877,625 1240,642 1360,645','357,652 730,664 768,668 852,664 1093,582');
  s += tris(true, '#00f0f4', 4, '178,732 590,640 614,634 708,615 1120,636 1277,655 1375,595','250,704 552,680 650,672 1073,668 1350,653','114,680 514,680 743,662 803,665 865,666');
  put('awesome', 23, 703, s);
  put('awesomeAxis', 1568, 703, line(1568.500, 702, 1568.500, 785, '#6d8796') + [703,726,760,782].map(y => mark(y)).join('') + text(1574, 709, '4.000', '#222') + tag(714, '2.599,0', '#e03020', 34) + tag(719.500, '2.598,0', '#f09010', 34) + tag(731, '1.600,2', '#e010e0', 34) + tag(736.500, '1.600,2', '#f010f0', 34) + tag(748, '0', '#f010f0', 6) + tag(753.500, '0', '#f010f0', 6) + mark(771, '-2.000'));
}

/* ---------- barra fuerza ---------- */
{
  const C = { y: '#fffd88', g: '#3cff3c', p: '#6a6abf', b: '#b0eefd', m: '#640000' };
  const seq = [
   [10, 'y15 g25 y38 g63 y98 m111 p183 b196 p231 b388 y448 g460 y474 g498 y520 g558 y570 g580 y642 g654 y692 g765 m778 p787 b812 p824 b837 p849 b872 p884 b920 y957 g969 m981 p1056 b1162 p1233 b1247 p1259 b1283 p1295 b1320 p1332 b1342 p1452 b1500'],
   [0, 'b48 p60 b86 p108 b181 p194 b243 p254 b316 p327 b339 p376 b521 p557 b605 p617 b665 y810 g822 y861 g955 y980 g993 y1077 g1100 y1234 g1246 y1293 g1331 y1380'],
   [0, 'y12 g156 y288 g300 y337 g348 y387 g397 y435 g470 y483 g507 y555 g567 m579 p602 b652 y747 g798 y918 g940 y953 g1014 m1026 p1110']];
  let s = grid(786, 831, [794, 810]);
  seq.forEach(([x, d], i) => { for (const t of d.split(' ')) { const e = +t.slice(1); s += rect((OX[i] + x / 3).toFixed(1), 786, ((e - x) / 3 + .2).toFixed(1), 45, C[t[0]]); x = e; } });
  s += rect(23, 822, 1327, 9, '#503060', .22);
  const top = runs('15,880 60,880 98,880 115,865 130,850 175,838 200,838 225,828 240,830 290,843 340,860 400,878 480,884 650,884 720,886 760,876 800,868 900,874 1000,870 1050,866 1100,870 1190,868 1220,855 1300,855 1350,852 1390,805 1420,786 1460,784 1498,792',
   '15,795 50,812 90,810 130,808 200,825 300,845 370,840 440,860 520,873 555,865 700,878 730,885 860,891 880,885 960,878 1090,880 1140,892 1378,893',
   '60,892 130,882 180,878 250,888 420,893 450,882 500,878 560,884 580,862 600,862 660,876 700,888 800,890 1000,891 1010,880 1030,835 1060,805 1104,775');
  for (let i = 1; i < N; i++) {
    const x = bars[i], y = at(top, x), q = at(top, bars[i - 1]);
    s += rect((x - 1.200).toFixed(1), Math.min(y, 825.500).toFixed(1), 2.400, Math.max(1.500, 826 - y).toFixed(1), y < q - .05 ? '#1c1cf0' : '#f02c2c', .72);
  }
  s += line(23, 822.500, 1348, 822.500, '#222', 1.300);
  put('barra', 23, 786, s);
  put('barraAxis', 1568, 786, line(1568.500, 785, 1568.500, 831, '#6d8796') + mark(794) + mark(802) + mark(810, '2') + mark(817) + tag(790.500, '4,7560', '#1414d0', 26) + tag(822, '0,5000', '#222', 26));
}

/* ---------- time axis ---------- */
put('time', 23, 831, line(23, 831.500, 1568, 831.500, '#7d94a1') + ticks.map(([x, t]) => line(x, 831, x, 834, '#6d8796') + text(x, 841, t, '#222', 'text-anchor="middle"')).join(''));
</script>
</body>
</html>
